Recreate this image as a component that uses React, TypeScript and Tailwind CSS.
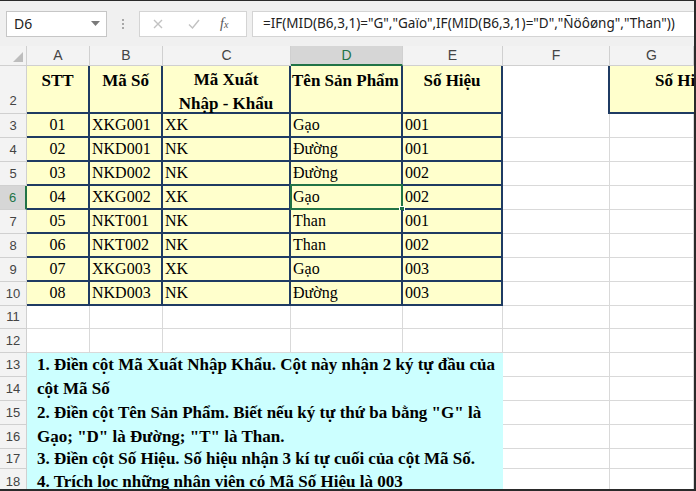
import React from "react"

const rows = [
    ["01", "XKG001", "XK", "Gạo", "001"],
    ["02", "NKD001", "NK", "Đường", "001"],
    ["03", "NKD002", "NK", "Đường", "002"],
    ["04", "XKG002", "XK", "Gạo", "002"],
    ["05", "NKT001", "NK", "Than", "001"],
    ["06", "NKT002", "NK", "Than", "002"],
    ["07", "XKG003", "XK", "Gạo", "003"],
    ["08", "NKD003", "NK", "Đường", "003"],
]

const notes = [
    { h: "h-[24px]", text: "1. Điền cột Mã Xuất Nhập Khẩu. Cột này nhận 2 ký tự đầu của" },
    { h: "h-[24px]", text: "cột Mã Số" },
    { h: "h-[24px]", text: "2. Điền cột Tên Sản Phẩm. Biết nếu ký tự thứ ba bằng \"G\" là" },
    { h: "h-[24px]", text: "Gạo; \"D\" là Đường; \"T\" là Than." },
    { h: "h-[20px]", text: "3. Điền cột Số Hiệu. Số hiệu nhận 3 kí tự cuối của cột Mã Số." },
    { h: "flex-1", text: "4. Trích lọc những nhân viên có Mã Số Hiệu là 003" },
]

const rowHead = "w-[27px] shrink-0 flex items-center justify-center bg-[#f3f3f3] border-r border-b border-[#d0d0d0] text-[13px] text-[#444] font-['Liberation_Sans',sans-serif]"
const grid = "shrink-0 border-r border-b border-[#d9d9d9] bg-white"
const cell = "shrink-0 bg-[#ffffcc] border-r-2 border-b-2 border-[#1f3b63] flex items-center text-[16px] text-black font-['Liberation_Serif',serif]"
const head = "text-[17px] font-bold pt-[2px]"

const ColHead = ({ label, w, active }: { label: string, w: string, active?: boolean }) => (
    <div className={`${w} shrink-0 flex items-center justify-center border-r border-[#d0d0d0] text-[14px] ${active ? "bg-[#d6d6d6] text-[#217346] border-b-2 border-b-[#217346]" : "bg-[#f3f3f3] text-[#444] border-b border-b-[#d0d0d0]"}`}>
        {label}
    </div>
)

export default function App() {
    return (
        <div className="w-[696px] h-[491px] flex flex-col overflow-hidden bg-white border-t border-r-2 border-b-2 border-[#2a2a2a] font-['Liberation_Sans',sans-serif]">
            {/* formula bar */}
            <div className="h-[45px] shrink-0 flex items-center bg-[#f0f0f0] pl-[6px] font-['Noto_Sans',sans-serif]">
                <div className="w-[101px] h-[26px] bg-white border border-[#c6c6c6] flex items-center justify-between pl-[7px] pr-[6px] text-[14px] text-[#222]">
                    <span>D6</span>
                    <svg width="9" height="5" viewBox="0 0 9 5"><path d="M0 0h9L4.5 5z" fill="#7a7a7a" /></svg>
                </div>
                <div className="w-[32px] flex flex-col items-center gap-[2px]">
                    <span className="w-[2px] h-[2px] bg-[#a8a8a8]" />
                    <span className="w-[2px] h-[2px] bg-[#a8a8a8]" />
                    <span className="w-[2px] h-[2px] bg-[#a8a8a8]" />
                </div>
                <div className="w-[108px] h-[26px] bg-white border border-[#d4d4d4] flex items-center">
                    <svg className="ml-[13px]" width="10" height="10" viewBox="0 0 10 10"><path d="M1 1l8 8M9 1l-8 8" stroke="#c2c2c2" strokeWidth="1.4" /></svg>
                    <svg className="ml-[25px]" width="12" height="10" viewBox="0 0 12 10"><path d="M1 5.5l3.5 3.5L11 1" stroke="#c2c2c2" strokeWidth="1.4" fill="none" /></svg>
                    <span className="ml-[20px] text-[14px] italic text-[#555] font-['Liberation_Serif',serif]">f<span className="text-[10px]">x</span></span>
                </div>
                <div className="ml-[5px] flex-1 h-[26px] bg-white border border-r-0 border-[#d4d4d4] flex items-center pl-[10px] text-[13.5px] text-[#222] whitespace-nowrap">
                    =IF(MID(B6,3,1)="G","Gaïo",IF(MID(B6,3,1)="D","Ñöôøng","Than"))
                </div>
            </div>

            {/* column headers */}
            <div className="h-[20px] shrink-0 flex">
                <div className="w-[27px] shrink-0 bg-[#f3f3f3] border-r border-b border-[#d0d0d0] flex items-end justify-end p-[3px]">
                    <svg width="10" height="10" viewBox="0 0 10 10"><path d="M10 0v10H0z" fill="#bdbdbd" /></svg>
                </div>
                <ColHead label="A" w="w-[63px]" />
                <ColHead label="B" w="w-[73px]" />
                <ColHead label="C" w="w-[128px]" />
                <ColHead label="D" w="w-[112px]" active />
                <ColHead label="E" w="w-[100px]" />
                <ColHead label="F" w="w-[107px]" />
                <ColHead label="G" w="flex-1" />
            </div>

            {/* header row */}
            <div className="h-[48px] shrink-0 flex">
                <div className={`${rowHead} !items-end pb-[3px]`}>2</div>
                <div className={`${cell} ${head} w-[63px] !items-start justify-center`}>STT</div>
                <div className={`${cell} ${head} w-[73px] !items-start justify-center`}>Mã Số</div>
                <div className={`${cell} ${head} w-[128px] flex-col !items-center justify-start leading-[24px]`}>
                    <span>Mã Xuất</span>
                    <span>Nhập - Khẩu</span>
                </div>
                <div className={`${cell} ${head} w-[112px] !items-start pl-[1px] whitespace-nowrap overflow-hidden`}>Tên Sản Phẩm</div>
                <div className={`${cell} ${head} w-[100px] !items-start justify-center`}>Số Hiệu</div>
                <div className="w-[107px] shrink-0 bg-white border-r-2 border-[#1f3b63]" />
                <div className="flex-1 min-w-0 overflow-hidden bg-[#ffffcc] border-b-2 border-[#1f3b63] pt-[2px] pl-[45px] text-[17px] font-bold whitespace-nowrap font-['Liberation_Serif',serif]">Số Hiệu</div>
            </div>

            {/* data rows */}
            {rows.map((r, i) => {
                const sel = i === 3
                return (
                    <div key={i} className="h-[24px] shrink-0 flex">
                        <div className={`${rowHead} ${sel ? "!bg-[#d6d6d6] !text-[#217346] !border-r-2 !border-r-[#217346]" : ""}`}>{i + 3}</div>
                        <div className={`${cell} w-[63px] justify-center`}>{r[0]}</div>
                        <div className={`${cell} w-[73px] pl-[2px]`}>{r[1]}</div>
                        <div className={`${cell} w-[128px] pl-[2px]`}>{r[2]}</div>
                        <div className={`${cell} w-[112px] pl-[2px] relative`}>
                            {r[3]}
                            {sel && (
                                <div className="absolute -left-[1px] -top-[2px] -right-[2px] -bottom-[2px] border-2 border-[#217346]">
                                    <div className="absolute -right-[4px] -bottom-[4px] w-[6px] h-[6px] bg-[#217346] border border-white" />
                                </div>
                            )}
                        </div>
                        <div className={`${cell} w-[100px] pl-[2px]`}>{r[4]}</div>
                        <div className={`${grid} w-[107px]`} />
                        <div className={`${grid} flex-1`} />
                    </div>
                )
            })}

            {/* empty rows */}
            {[{ n: 11, h: "h-[23px]" }, { n: 12, h: "h-[24px]" }].map(r => (
                <div key={r.n} className={`${r.h} shrink-0 flex`}>
                    <div className={rowHead}>{r.n}</div>
                    <div className={`${grid} w-[63px]`} />
                    <div className={`${grid} w-[73px]`} />
                    <div className={`${grid} w-[128px]`} />
                    <div className={`${grid} w-[112px]`} />
                    <div className={`${grid} w-[100px]`} />
                    <div className={`${grid} w-[107px]`} />
                    <div className={`${grid} flex-1`} />
                </div>
            ))}

            {/* notes block */}
            <div className="flex-1 flex">
                <div className="w-[27px] shrink-0 flex flex-col">
                    {notes.map((n, i) => (
                        <div key={i} className={`${n.h} ${rowHead} shrink-0`}>{i + 13}</div>
                    ))}
                </div>
                <div className="w-[476px] shrink-0 bg-[#ccffff] flex flex-col pl-[10px] text-[17px] font-bold text-black font-['Liberation_Serif',serif]">
                    {notes.map((n, i) => (
                        <div key={i} className={`${n.h} shrink-0 flex items-center whitespace-nowrap`}>{n.text}</div>
                    ))}
                </div>
                <div className="w-[107px] shrink-0 flex flex-col">
                    {notes.map((n, i) => (
                        <div key={i} className={`${n.h} ${grid}`} />
                    ))}
                </div>
                <div className="flex-1 flex flex-col">
                    {notes.map((n, i) => (
                        <div key={i} className={`${n.h} ${grid}`} />
                    ))}
                </div>
            </div>
        </div>
    )
}
